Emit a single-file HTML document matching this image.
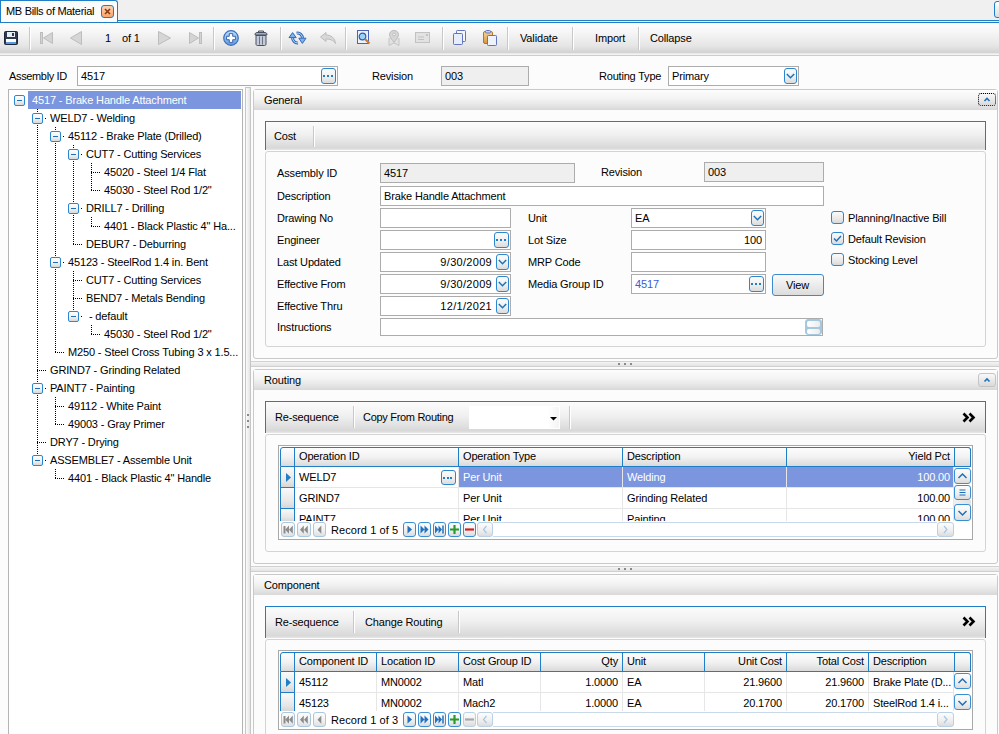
<!DOCTYPE html><html><head><meta charset="utf-8"><style>
*{margin:0;padding:0;box-sizing:border-box}
html,body{width:999px;height:734px;overflow:hidden;background:#fcfcfc;font-family:"Liberation Sans",sans-serif;font-size:11px;color:#000}
div{position:absolute}
.t{white-space:nowrap;line-height:13px;font-size:11px;letter-spacing:-0.15px}
.tb{background:linear-gradient(#fdfdfd,#f3f3f3 45%,#e2e2e2)}
.hdr{background:linear-gradient(#fdfdfd,#f3f3f3 45%,#e3e3e3 80%,#d8d8d8)}
.box{border:1px solid #acacac;background:#fff}
.ro{border:1px solid #acacac;background:#efefef}
.sep{width:1px;background:#c8c8c8;box-shadow:1px 0 0 #fff}
.bbtn{border:1px solid #2d87cf;border-radius:3px;background:linear-gradient(#fbfbfb,#f1f1f1 50%,#dcdcdc)}
.dot{width:2px;height:2px;background:#1f7ec6}
svg{position:absolute;overflow:visible}
</style></head><body>
<div style="left:0px;top:0px;width:999px;height:22px;background:#f0f0f0"></div>
<div style="left:0px;top:20px;width:999px;height:1px;background:#1f7ec6"></div>
<div style="left:0px;top:22px;width:999px;height:1px;background:#1f7ec6"></div>
<div style="left:0px;top:0px;width:118px;height:22px;background:#fcfcfc;border:1px solid #1f7ec6;border-bottom:none;border-radius:0 3px 0 0"></div>
<div class="t" style="left:6px;top:5px;letter-spacing:-0.3px;color:#000">MB Bills of Material</div>
<div style="left:101px;top:5px;width:13px;height:13px;border:1px solid #1f7ec6;border-radius:3px;background:linear-gradient(#fcd3b3,#f9a36c)"><svg width="11" height="11" style="left:0;top:0"><path d="M3 3L8 8M8 3L3 8" stroke="#8a3a0a" stroke-width="1.6"/></svg></div>
<div style="left:994px;top:1px;width:8px;height:17px;border:1px solid #1f7ec6;border-radius:3px;background:linear-gradient(#fff,#ddd)"></div>
<div style="left:0px;top:23px;width:999px;height:30px;background:linear-gradient(#fdfdfd,#f6f6f6 30%,#e6e6e6 75%,#d2d2d2)"></div>
<div style="left:0px;top:53px;width:999px;height:1px;background:#e9e9e9"></div>
<div style="left:0px;top:54px;width:999px;height:1px;background:#f3f3f3"></div>
<div style="left:0px;top:55px;width:999px;height:1px;background:#cdcdcd"></div>
<div class="sep" style="left:29px;top:27px;width:1px;height:23px;"></div>
<div class="sep" style="left:213px;top:27px;width:1px;height:23px;"></div>
<div class="sep" style="left:280px;top:27px;width:1px;height:23px;"></div>
<div class="sep" style="left:345px;top:27px;width:1px;height:23px;"></div>
<div class="sep" style="left:442px;top:27px;width:1px;height:23px;"></div>
<div class="sep" style="left:507px;top:27px;width:1px;height:23px;"></div>
<div class="sep" style="left:572px;top:27px;width:1px;height:23px;"></div>
<div class="sep" style="left:638px;top:27px;width:1px;height:23px;"></div>
<svg width="14" height="14" style="left:4px;top:31px"><rect x="0.5" y="0.5" width="13" height="13" rx="1" fill="#2f3a4e" stroke="#1e2838"/><rect x="3" y="1" width="8" height="5" fill="#e8eef6"/><rect x="8" y="2" width="2" height="3" fill="#2f3a4e"/><rect x="2" y="8" width="10" height="5" fill="#fff"/><rect x="2" y="11" width="10" height="2" fill="#5a9ae0"/></svg>
<svg width="14" height="14" style="left:40px;top:31px"><rect x="0.5" y="1.5" width="2" height="11" fill="#d4d4d4" stroke="#bdbdbd"/><path d="M12.5 1.5 L3.5 7 L12.5 12.5 Z" fill="#d4d4d4" stroke="#bdbdbd"/></svg>
<svg width="14" height="14" style="left:70px;top:31px"><path d="M11.5 0.5 L0.5 7 L11.5 13.5 Z" fill="#d6d6d6" stroke="#bdbdbd"/></svg>
<div class="t" style="left:105px;top:32px;color:#000">1</div>
<div class="t" style="left:122px;top:32px;color:#000">of 1</div>
<svg width="14" height="14" style="left:158px;top:31px"><path d="M0.5 0.5 L12.5 7 L0.5 13.5 Z" fill="#d6d6d6" stroke="#bdbdbd"/></svg>
<svg width="14" height="14" style="left:189px;top:31px"><path d="M0.5 1.5 L9.5 7 L0.5 12.5 Z" fill="#d4d4d4" stroke="#bdbdbd"/><rect x="10.5" y="1.5" width="2" height="11" fill="#d4d4d4" stroke="#bdbdbd"/></svg>
<svg width="17" height="17" style="left:223px;top:30px"><defs><linearGradient id="pg" x1="0" y1="0" x2="0" y2="1"><stop offset="0" stop-color="#bfe0f8"/><stop offset="1" stop-color="#5b98dc"/></linearGradient></defs><circle cx="8" cy="8" r="7.3" fill="url(#pg)" stroke="#3d6cc0" stroke-width="1.2"/><path d="M6.3 3.6H9.7V6.3H12.4V9.7H9.7V12.4H6.3V9.7H3.6V6.3H6.3Z" fill="#fff" stroke="#2f5aa8" stroke-width="0.9"/></svg>
<svg width="14" height="16" style="left:254px;top:30px"><path d="M4.5 2.5 V1 H9.5 V2.5" fill="#d0d4dc" stroke="#4a5064" stroke-width="1"/><path d="M1 5 C1 3 2 2.5 3 2.5 H11 C12 2.5 13 3 13 5 Z" fill="#a4abba" stroke="#4a5064" stroke-width="1"/><path d="M2 5.5 H12 V14 C12 15 11.5 15.5 10.5 15.5 H3.5 C2.5 15.5 2 15 2 14 Z" fill="#c4cbd8" stroke="#4a5064" stroke-width="1"/><path d="M5.5 6.5V14.5M8.5 6.5V14.5" stroke="#6a7286" stroke-width="1"/></svg>
<svg width="25" height="20" style="left:285px;top:28px"><g fill="none" stroke-linecap="butt"><path d="M7.6 9.6 A4.9 4.9 0 0 0 13 14.9" stroke="#3566b8" stroke-width="3"/><path d="M11.6 5.1 A4.9 4.9 0 0 1 17.4 10.4" stroke="#3566b8" stroke-width="3"/><path d="M7.6 9.6 A4.9 4.9 0 0 0 13 14.9" stroke="#b6e0f8" stroke-width="1"/><path d="M11.6 5.1 A4.9 4.9 0 0 1 17.4 10.4" stroke="#b6e0f8" stroke-width="1"/></g><path d="M4 9.6 L7.6 4.6 L11.2 9.6 Z" fill="#7fb6ea" stroke="#3566b8" stroke-width="1"/><path d="M13.8 10.2 L17.4 15.4 L21 10.2 Z" fill="#7fb6ea" stroke="#3566b8" stroke-width="1"/></svg>
<svg width="16" height="12" style="left:320px;top:32px"><path d="M0.5 5 L6 0.5 V3 C11 3 15 6 15.5 11.5 C13 8 10 7 6 7 V9.5 Z" fill="#d8d8d8" stroke="#bcbcbc"/></svg>
<svg width="15" height="16" style="left:357px;top:30px"><rect x="0.5" y="0.5" width="11" height="13" fill="#eef3fb" stroke="#4d63b8"/><circle cx="5.5" cy="6.5" r="3.3" fill="#9fd0f5" stroke="#2c5fa8" stroke-width="1.2"/><path d="M8 9 L12.5 13.5" stroke="#d67a2a" stroke-width="2.2"/></svg>
<svg width="12" height="16" style="left:388px;top:30px"><path d="M1 8 V15.5 L6 13 L11 15.5 V8" fill="#e2e2e2" stroke="#c4c4c4"/><path d="M6 0.5 C8.8 0.5 10.5 2.3 10.5 4.8 C10.5 7.5 7.5 10 6 12.5 C4.5 10 1.5 7.5 1.5 4.8 C1.5 2.3 3.2 0.5 6 0.5Z" fill="#d6d6d6" stroke="#bcbcbc"/><circle cx="6" cy="4.5" r="1.4" fill="#f6f6f6" stroke="#bcbcbc"/></svg>
<svg width="16" height="12" style="left:415px;top:32px"><rect x="0.5" y="0.5" width="14" height="10" fill="#e2e2e2" stroke="#c2c2c2"/><rect x="11" y="2" width="2" height="2" fill="#c2c2c2"/><path d="M3 5H9M3 7.5H9" stroke="#c2c2c2"/></svg>
<svg width="15" height="16" style="left:452px;top:30px"><rect x="4.5" y="0.5" width="9" height="11" rx="0.8" fill="#f4f7fc" stroke="#6276c0"/><rect x="1.5" y="3.5" width="9" height="11" rx="0.8" fill="#e8eef9" stroke="#6276c0"/></svg>
<svg width="15" height="16" style="left:483px;top:30px"><defs><linearGradient id="cg" x1="0" y1="0" x2="0" y2="1"><stop offset="0" stop-color="#f6d79a"/><stop offset="1" stop-color="#d9953a"/></linearGradient></defs><rect x="0.5" y="1.5" width="9" height="12" rx="1.5" fill="url(#cg)" stroke="#b07828"/><rect x="2.5" y="0.5" width="5" height="2.5" rx="1" fill="#c9d3ec" stroke="#6276c0"/><rect x="4.5" y="5.5" width="9" height="10" rx="0.8" fill="#eef2fb" stroke="#6276c0"/></svg>
<div class="t" style="left:520px;top:32px;">Validate</div>
<div class="t" style="left:595px;top:32px;">Import</div>
<div class="t" style="left:650px;top:32px;">Collapse</div>
<div class="t" style="left:9px;top:70px;letter-spacing:-0.35px">Assembly ID</div>
<div class="box" style="left:77px;top:66px;width:261px;height:20px;"></div>
<div class="t" style="left:81px;top:70px;">4517</div>
<div class="bbtn" style="left:321px;top:68px;width:15px;height:16px;"><div class="dot" style="left:1px;top:6px"></div><div class="dot" style="left:5px;top:6px"></div><div class="dot" style="left:9px;top:6px"></div></div>
<div class="t" style="left:372px;top:70px;">Revision</div>
<div class="ro" style="left:441px;top:66px;width:88px;height:20px;"></div>
<div class="t" style="left:445px;top:70px;">003</div>
<div class="t" style="left:599px;top:70px;letter-spacing:-0.2px">Routing Type</div>
<div class="box" style="left:668px;top:66px;width:131px;height:20px;"></div>
<div class="t" style="left:672px;top:70px;">Primary</div>
<div class="bbtn" style="left:784px;top:68px;width:13px;height:16px;"><svg width="11" height="14" style="left:0;top:0"><path d="M1.8 5 L5.5 8.7 L9.2 5" fill="none" stroke="#1a72bf" stroke-width="1.5"/></svg></div>
<div style="left:8px;top:89px;width:235px;height:660px;border:1px solid #b4b4b4;background:#fff"></div>
<div style="left:28px;top:91px;width:213px;height:18px;background:#7b96de"></div>
<div style="left:37px;top:109px;width:1px;height:351px;background:repeating-linear-gradient(#000 0 1px,transparent 1px 2px)"></div>
<div style="left:55px;top:127px;width:1px;height:225px;background:repeating-linear-gradient(#000 0 1px,transparent 1px 2px)"></div>
<div style="left:73px;top:145px;width:1px;height:99px;background:repeating-linear-gradient(#000 0 1px,transparent 1px 2px)"></div>
<div style="left:91px;top:163px;width:1px;height:27px;background:repeating-linear-gradient(#000 0 1px,transparent 1px 2px)"></div>
<div style="left:91px;top:217px;width:1px;height:9px;background:repeating-linear-gradient(#000 0 1px,transparent 1px 2px)"></div>
<div style="left:73px;top:271px;width:1px;height:45px;background:repeating-linear-gradient(#000 0 1px,transparent 1px 2px)"></div>
<div style="left:91px;top:325px;width:1px;height:9px;background:repeating-linear-gradient(#000 0 1px,transparent 1px 2px)"></div>
<div style="left:55px;top:397px;width:1px;height:27px;background:repeating-linear-gradient(#000 0 1px,transparent 1px 2px)"></div>
<div style="left:55px;top:469px;width:1px;height:9px;background:repeating-linear-gradient(#000 0 1px,transparent 1px 2px)"></div>
<div style="left:14px;top:95px;width:11px;height:11px;border:1px solid #2d87cf;border-radius:2px;background:linear-gradient(#fdfdfd,#f2f2f2 50%,#dadada)"><div style="left:2px;top:4px;width:5px;height:1px;background:#1f6fb8"></div></div>
<div class="t" style="left:32px;top:94px;color:#fff">4517 - Brake Handle Attachment</div>
<div style="left:45px;top:118px;width:1px;height:1px;background:#000"></div>
<div style="left:32px;top:113px;width:11px;height:11px;border:1px solid #2d87cf;border-radius:2px;background:linear-gradient(#fdfdfd,#f2f2f2 50%,#dadada)"><div style="left:2px;top:4px;width:5px;height:1px;background:#1f6fb8"></div></div>
<div class="t" style="left:50px;top:112px;color:#000">WELD7 - Welding</div>
<div style="left:63px;top:136px;width:1px;height:1px;background:#000"></div>
<div style="left:50px;top:131px;width:11px;height:11px;border:1px solid #2d87cf;border-radius:2px;background:linear-gradient(#fdfdfd,#f2f2f2 50%,#dadada)"><div style="left:2px;top:4px;width:5px;height:1px;background:#1f6fb8"></div></div>
<div class="t" style="left:68px;top:130px;color:#000">45112 - Brake Plate (Drilled)</div>
<div style="left:81px;top:154px;width:1px;height:1px;background:#000"></div>
<div style="left:68px;top:149px;width:11px;height:11px;border:1px solid #2d87cf;border-radius:2px;background:linear-gradient(#fdfdfd,#f2f2f2 50%,#dadada)"><div style="left:2px;top:4px;width:5px;height:1px;background:#1f6fb8"></div></div>
<div class="t" style="left:86px;top:148px;color:#000">CUT7 - Cutting Services</div>
<div style="left:91px;top:172px;width:10px;height:1px;background:repeating-linear-gradient(90deg,#000 0 1px,transparent 1px 2px)"></div>
<div class="t" style="left:104px;top:166px;color:#000">45020 - Steel 1/4 Flat</div>
<div style="left:91px;top:190px;width:10px;height:1px;background:repeating-linear-gradient(90deg,#000 0 1px,transparent 1px 2px)"></div>
<div class="t" style="left:104px;top:184px;color:#000">45030 - Steel Rod 1/2&quot;</div>
<div style="left:81px;top:208px;width:1px;height:1px;background:#000"></div>
<div style="left:68px;top:203px;width:11px;height:11px;border:1px solid #2d87cf;border-radius:2px;background:linear-gradient(#fdfdfd,#f2f2f2 50%,#dadada)"><div style="left:2px;top:4px;width:5px;height:1px;background:#1f6fb8"></div></div>
<div class="t" style="left:86px;top:202px;color:#000">DRILL7 - Drilling</div>
<div style="left:91px;top:226px;width:10px;height:1px;background:repeating-linear-gradient(90deg,#000 0 1px,transparent 1px 2px)"></div>
<div class="t" style="left:104px;top:220px;color:#000">4401 - Black Plastic 4&quot; Ha...</div>
<div style="left:73px;top:244px;width:10px;height:1px;background:repeating-linear-gradient(90deg,#000 0 1px,transparent 1px 2px)"></div>
<div class="t" style="left:86px;top:238px;color:#000">DEBUR7 - Deburring</div>
<div style="left:63px;top:262px;width:1px;height:1px;background:#000"></div>
<div style="left:50px;top:257px;width:11px;height:11px;border:1px solid #2d87cf;border-radius:2px;background:linear-gradient(#fdfdfd,#f2f2f2 50%,#dadada)"><div style="left:2px;top:4px;width:5px;height:1px;background:#1f6fb8"></div></div>
<div class="t" style="left:68px;top:256px;color:#000">45123 - SteelRod 1.4 in. Bent</div>
<div style="left:73px;top:280px;width:10px;height:1px;background:repeating-linear-gradient(90deg,#000 0 1px,transparent 1px 2px)"></div>
<div class="t" style="left:86px;top:274px;color:#000">CUT7 - Cutting Services</div>
<div style="left:73px;top:298px;width:10px;height:1px;background:repeating-linear-gradient(90deg,#000 0 1px,transparent 1px 2px)"></div>
<div class="t" style="left:86px;top:292px;color:#000">BEND7 - Metals Bending</div>
<div style="left:81px;top:316px;width:1px;height:1px;background:#000"></div>
<div style="left:68px;top:311px;width:11px;height:11px;border:1px solid #2d87cf;border-radius:2px;background:linear-gradient(#fdfdfd,#f2f2f2 50%,#dadada)"><div style="left:2px;top:4px;width:5px;height:1px;background:#1f6fb8"></div></div>
<div class="t" style="left:86px;top:310px;color:#000">&nbsp;- default</div>
<div style="left:91px;top:334px;width:10px;height:1px;background:repeating-linear-gradient(90deg,#000 0 1px,transparent 1px 2px)"></div>
<div class="t" style="left:104px;top:328px;color:#000">45030 - Steel Rod 1/2&quot;</div>
<div style="left:55px;top:352px;width:10px;height:1px;background:repeating-linear-gradient(90deg,#000 0 1px,transparent 1px 2px)"></div>
<div class="t" style="left:68px;top:346px;color:#000">M250 - Steel Cross Tubing 3 x 1.5...</div>
<div style="left:37px;top:370px;width:10px;height:1px;background:repeating-linear-gradient(90deg,#000 0 1px,transparent 1px 2px)"></div>
<div class="t" style="left:50px;top:364px;color:#000">GRIND7 - Grinding Related</div>
<div style="left:45px;top:388px;width:1px;height:1px;background:#000"></div>
<div style="left:32px;top:383px;width:11px;height:11px;border:1px solid #2d87cf;border-radius:2px;background:linear-gradient(#fdfdfd,#f2f2f2 50%,#dadada)"><div style="left:2px;top:4px;width:5px;height:1px;background:#1f6fb8"></div></div>
<div class="t" style="left:50px;top:382px;color:#000">PAINT7 - Painting</div>
<div style="left:55px;top:406px;width:10px;height:1px;background:repeating-linear-gradient(90deg,#000 0 1px,transparent 1px 2px)"></div>
<div class="t" style="left:68px;top:400px;color:#000">49112 - White Paint</div>
<div style="left:55px;top:424px;width:10px;height:1px;background:repeating-linear-gradient(90deg,#000 0 1px,transparent 1px 2px)"></div>
<div class="t" style="left:68px;top:418px;color:#000">49003 - Gray Primer</div>
<div style="left:37px;top:442px;width:10px;height:1px;background:repeating-linear-gradient(90deg,#000 0 1px,transparent 1px 2px)"></div>
<div class="t" style="left:50px;top:436px;color:#000">DRY7 - Drying</div>
<div style="left:45px;top:460px;width:1px;height:1px;background:#000"></div>
<div style="left:32px;top:455px;width:11px;height:11px;border:1px solid #2d87cf;border-radius:2px;background:linear-gradient(#fdfdfd,#f2f2f2 50%,#dadada)"><div style="left:2px;top:4px;width:5px;height:1px;background:#1f6fb8"></div></div>
<div class="t" style="left:50px;top:454px;color:#000">ASSEMBLE7 - Assemble Unit</div>
<div style="left:55px;top:478px;width:10px;height:1px;background:repeating-linear-gradient(90deg,#000 0 1px,transparent 1px 2px)"></div>
<div class="t" style="left:68px;top:472px;color:#000">4401 - Black Plastic 4&quot; Handle</div>
<div style="left:245px;top:87px;width:6px;height:660px;border:1px solid #c6c6c6;border-bottom:none;border-radius:1px 1px 0 0;background:linear-gradient(90deg,#fbfbfb,#e4e4e4)"></div>
<div style="left:247px;top:414px;width:2px;height:2px;background:#8a8a8a"></div>
<div style="left:247px;top:420px;width:2px;height:2px;background:#8a8a8a"></div>
<div style="left:247px;top:426px;width:2px;height:2px;background:#8a8a8a"></div>
<div style="left:253px;top:89px;width:745px;height:270px;border:1px solid #c9c9c9;border-radius:3px;background:#fcfcfc"></div>
<div class="hdr" style="left:254px;top:90px;width:743px;height:20px;"></div>
<div class="t" style="left:264px;top:94px;">General</div>
<div style="left:978px;top:93px;width:18px;height:13px;border:1px dotted #000;border-radius:3px;background:linear-gradient(#f9f9f9,#e6e6e6 60%,#dadada)"><svg width="16" height="11" style="left:0;top:0"><path d="M5.5 7.0 L8 4.5 L10.5 7.0" fill="none" stroke="#1a72bf" stroke-width="1.6"/></svg></div>
<div style="left:265px;top:121px;width:721px;height:29px;border:1px solid #1f7ec6;border-bottom:none;background:linear-gradient(#fcfcfc,#f0f0f0 45%,#d8d8d8 93%,#e8e8e8)"></div>
<div class="t" style="left:274px;top:130px;">Cost</div>
<div class="sep" style="left:313px;top:126px;width:1px;height:21px;"></div>
<div style="left:265px;top:151px;width:721px;height:196px;border:1px solid #d4d4d4;border-radius:3px;background:#fcfcfc"></div>
<div class="t" style="left:277px;top:167px;">Assembly ID</div>
<div class="ro" style="left:380px;top:163px;width:195px;height:20px;"></div>
<div class="t" style="left:384px;top:167px;">4517</div>
<div class="t" style="left:601px;top:166px;">Revision</div>
<div class="ro" style="left:704px;top:162px;width:120px;height:20px;"></div>
<div class="t" style="left:708px;top:166px;">003</div>
<div class="t" style="left:277px;top:190px;">Description</div>
<div class="box" style="left:380px;top:186px;width:444px;height:20px;"></div>
<div class="t" style="left:384px;top:190px;">Brake Handle Attachment</div>
<div class="t" style="left:277px;top:212px;">Drawing No</div>
<div class="box" style="left:380px;top:208px;width:131px;height:20px;"></div>
<div class="t" style="left:277px;top:234px;">Engineer</div>
<div class="box" style="left:380px;top:230px;width:131px;height:20px;"></div>
<div class="bbtn" style="left:494px;top:232px;width:15px;height:16px;"><div class="dot" style="left:1px;top:6px"></div><div class="dot" style="left:5px;top:6px"></div><div class="dot" style="left:9px;top:6px"></div></div>
<div class="t" style="left:277px;top:256px;">Last Updated</div>
<div class="box" style="left:380px;top:252px;width:131px;height:20px;"></div>
<div class="t" style="left:372px;top:256px;width:120px;text-align:right;letter-spacing:0.3px">9/30/2009</div>
<div class="bbtn" style="left:496px;top:254px;width:13px;height:16px;"><svg width="11" height="14" style="left:0;top:0"><path d="M1.8 5 L5.5 8.7 L9.2 5" fill="none" stroke="#1a72bf" stroke-width="1.5"/></svg></div>
<div class="t" style="left:277px;top:278px;">Effective From</div>
<div class="box" style="left:380px;top:274px;width:131px;height:20px;"></div>
<div class="t" style="left:372px;top:278px;width:120px;text-align:right;letter-spacing:0.3px">9/30/2009</div>
<div class="bbtn" style="left:496px;top:276px;width:13px;height:16px;"><svg width="11" height="14" style="left:0;top:0"><path d="M1.8 5 L5.5 8.7 L9.2 5" fill="none" stroke="#1a72bf" stroke-width="1.5"/></svg></div>
<div class="t" style="left:277px;top:300px;">Effective Thru</div>
<div class="box" style="left:380px;top:296px;width:131px;height:20px;"></div>
<div class="t" style="left:372px;top:300px;width:120px;text-align:right;letter-spacing:0.3px">12/1/2021</div>
<div class="bbtn" style="left:496px;top:298px;width:13px;height:16px;"><svg width="11" height="14" style="left:0;top:0"><path d="M1.8 5 L5.5 8.7 L9.2 5" fill="none" stroke="#1a72bf" stroke-width="1.5"/></svg></div>
<div class="t" style="left:277px;top:321px;">Instructions</div>
<div class="box" style="left:380px;top:318px;width:443px;height:18px;"></div>
<div style="left:805px;top:319px;width:17px;height:16px;border:1px solid #a6c8de;border-radius:3px;background:#a6c8de"><div style="left:1px;top:1px;width:13px;height:6px;border-radius:2px;background:linear-gradient(90deg,#fff,#ececec)"></div><div style="left:1px;top:9px;width:13px;height:5px;border-radius:2px;background:linear-gradient(90deg,#fff,#ececec)"></div></div>
<div class="t" style="left:528px;top:212px;">Unit</div>
<div class="box" style="left:631px;top:208px;width:135px;height:20px;"></div>
<div class="t" style="left:635px;top:212px;">EA</div>
<div class="bbtn" style="left:751px;top:210px;width:13px;height:16px;"><svg width="11" height="14" style="left:0;top:0"><path d="M1.8 5 L5.5 8.7 L9.2 5" fill="none" stroke="#1a72bf" stroke-width="1.5"/></svg></div>
<div class="t" style="left:528px;top:234px;">Lot Size</div>
<div class="box" style="left:631px;top:230px;width:135px;height:20px;"></div>
<div class="t" style="left:642px;top:234px;width:120px;text-align:right;">100</div>
<div class="t" style="left:528px;top:256px;">MRP Code</div>
<div class="box" style="left:631px;top:252px;width:135px;height:20px;"></div>
<div class="t" style="left:528px;top:278px;">Media Group ID</div>
<div class="box" style="left:631px;top:274px;width:135px;height:20px;"></div>
<div class="t" style="left:635px;top:278px;color:#3a5bd8">4517</div>
<div class="bbtn" style="left:749px;top:276px;width:15px;height:16px;"><div class="dot" style="left:1px;top:6px"></div><div class="dot" style="left:5px;top:6px"></div><div class="dot" style="left:9px;top:6px"></div></div>
<div style="left:772px;top:274px;width:52px;height:22px;border:1px solid #3c8ad0;border-radius:3px;background:linear-gradient(#fbfbfb,#ececec 50%,#dcdcdc)"></div>
<div class="t" style="left:786px;top:279px;">View</div>
<div style="left:831px;top:211px;width:13px;height:13px;border:1px solid #2d87cf;border-radius:3px;background:linear-gradient(#fbfbfb,#e9e9e9 60%,#d9d9d9)"></div>
<div class="t" style="left:848px;top:212px;">Planning/Inactive Bill</div>
<div style="left:831px;top:232px;width:13px;height:13px;border:1px solid #2d87cf;border-radius:3px;background:linear-gradient(#fbfbfb,#e9e9e9 60%,#d9d9d9)"><svg width="11" height="11" style="left:0;top:0"><path d="M2 5.5 L4.5 8 L9 3" fill="none" stroke="#1f6fb8" stroke-width="1.4"/></svg></div>
<div class="t" style="left:848px;top:233px;">Default Revision</div>
<div style="left:831px;top:253px;width:13px;height:13px;border:1px solid #2d87cf;border-radius:3px;background:linear-gradient(#fbfbfb,#e9e9e9 60%,#d9d9d9)"></div>
<div class="t" style="left:848px;top:254px;">Stocking Level</div>
<div style="left:251px;top:361px;width:748px;height:6px;background:linear-gradient(#d2d2d2 0 1px,#f4f4f4 1px,#e4e4e4 80%,#cfcfcf 80%)"></div>
<div style="left:618px;top:363px;width:2px;height:2px;background:#8a8a8a"></div>
<div style="left:624px;top:363px;width:2px;height:2px;background:#8a8a8a"></div>
<div style="left:630px;top:363px;width:2px;height:2px;background:#8a8a8a"></div>
<div style="left:253px;top:369px;width:745px;height:195px;border:1px solid #c9c9c9;border-radius:3px;background:#fcfcfc"></div>
<div class="hdr" style="left:254px;top:370px;width:743px;height:20px;"></div>
<div class="t" style="left:264px;top:374px;">Routing</div>
<div style="left:978px;top:373px;width:18px;height:14px;border:1px solid #c4c4c4;border-radius:3px;background:linear-gradient(#f9f9f9,#e6e6e6 60%,#dadada)"><svg width="16" height="12" style="left:0;top:0"><path d="M5.5 7.5 L8 5.0 L10.5 7.5" fill="none" stroke="#1a72bf" stroke-width="1.6"/></svg></div>
<div style="left:265px;top:401px;width:721px;height:32px;border:1px solid #1f7ec6;border-bottom:none;background:linear-gradient(#fcfcfc,#f0f0f0 45%,#d8d8d8 93%,#e8e8e8)"></div>
<div class="t" style="left:275px;top:411px;">Re-sequence</div>
<div class="sep" style="left:353px;top:406px;width:1px;height:22px;"></div>
<div class="t" style="left:363px;top:411px;letter-spacing:-0.3px">Copy From Routing</div>
<div style="left:469px;top:406px;width:91px;height:23px;background:#fff"></div>
<div style="left:548px;top:407px;width:11px;height:21px;background:linear-gradient(90deg,#fff,#f4f4f4)"></div>
<svg width="7" height="4" style="left:550px;top:417px"><path d="M0 0H7L3.5 3.5Z" fill="#000"/></svg>
<div class="sep" style="left:569px;top:406px;width:1px;height:23px;"></div>
<svg width="15" height="12" style="left:962px;top:412px"><path d="M1.5 1.5 L5.5 5.5 L1.5 9.5 M7.5 1.5 L11.5 5.5 L7.5 9.5" fill="none" stroke="#000" stroke-width="2.6" stroke-linejoin="miter"/></svg>
<div style="left:265px;top:434px;width:721px;height:118px;border:1px solid #d4d4d4;border-radius:3px;background:#fcfcfc"></div>
<div style="left:278px;top:445px;width:695px;height:95px;border:1px solid #a8a8a8;background:#fff"></div>
<div style="left:280px;top:447px;width:691px;height:20px;border:1px solid #1f7ec6;border-radius:3px 3px 0 0;background:linear-gradient(#fdfdfd,#f2f2f2 50%,#dadada)"></div>
<div style="left:294px;top:447px;width:1px;height:20px;background:#1f7ec6"></div>
<div style="left:458px;top:447px;width:1px;height:20px;background:#1f7ec6"></div>
<div class="t" style="left:299px;top:450px;">Operation ID</div>
<div style="left:622px;top:447px;width:1px;height:20px;background:#1f7ec6"></div>
<div class="t" style="left:463px;top:450px;">Operation Type</div>
<div style="left:786px;top:447px;width:1px;height:20px;background:#1f7ec6"></div>
<div class="t" style="left:627px;top:450px;">Description</div>
<div style="left:954px;top:447px;width:1px;height:20px;background:#1f7ec6"></div>
<div class="t" style="left:787px;top:450px;width:163px;text-align:right">Yield Pct</div>
<div style="left:280px;top:467px;width:15px;height:21px;border-left:1px solid #1f7ec6;border-right:1px solid #1f7ec6;border-bottom:1px solid #1f7ec6;background:linear-gradient(#fafafa,#e6e6e6 70%,#d6d6d6)"></div>
<svg width="6" height="9" style="left:286px;top:473px"><path d="M0 0 L5 4.5 L0 9Z" fill="#1f7ec6"/></svg>
<div style="left:295px;top:467px;width:164px;height:21px;background:#fff;border-right:1px solid #e6e6e6;border-bottom:1px solid #e6e6e6;overflow:hidden"><div class="t" style="left:4px;top:4px;color:#000">WELD7</div></div>
<div style="left:459px;top:467px;width:164px;height:21px;background:#7b96de;border-right:1px solid #e6e6e6;border-bottom:1px solid #e6e6e6;overflow:hidden"><div class="t" style="left:4px;top:4px;color:#fff">Per Unit</div></div>
<div style="left:623px;top:467px;width:164px;height:21px;background:#7b96de;border-right:1px solid #e6e6e6;border-bottom:1px solid #e6e6e6;overflow:hidden"><div class="t" style="left:4px;top:4px;color:#fff">Welding</div></div>
<div style="left:787px;top:467px;width:167px;height:21px;background:#7b96de;border-right:1px solid #e6e6e6;border-bottom:1px solid #e6e6e6;overflow:hidden"><div class="t" style="left:0px;top:4px;width:163px;text-align:right;color:#fff">100.00</div></div>
<div style="left:280px;top:488px;width:15px;height:21px;border-left:1px solid #1f7ec6;border-right:1px solid #1f7ec6;border-bottom:1px solid #1f7ec6;background:linear-gradient(#fafafa,#e6e6e6 70%,#d6d6d6)"></div>
<div style="left:295px;top:488px;width:164px;height:21px;background:#fff;border-right:1px solid #e6e6e6;border-bottom:1px solid #e6e6e6;overflow:hidden"><div class="t" style="left:4px;top:4px;color:#000">GRIND7</div></div>
<div style="left:459px;top:488px;width:164px;height:21px;background:#fff;border-right:1px solid #e6e6e6;border-bottom:1px solid #e6e6e6;overflow:hidden"><div class="t" style="left:4px;top:4px;color:#000">Per Unit</div></div>
<div style="left:623px;top:488px;width:164px;height:21px;background:#fff;border-right:1px solid #e6e6e6;border-bottom:1px solid #e6e6e6;overflow:hidden"><div class="t" style="left:4px;top:4px;color:#000">Grinding Related</div></div>
<div style="left:787px;top:488px;width:167px;height:21px;background:#fff;border-right:1px solid #e6e6e6;border-bottom:1px solid #e6e6e6;overflow:hidden"><div class="t" style="left:0px;top:4px;width:163px;text-align:right;color:#000">100.00</div></div>
<div style="left:280px;top:509px;width:15px;height:12px;border-left:1px solid #1f7ec6;border-right:1px solid #1f7ec6;background:linear-gradient(#fafafa,#e6e6e6 70%,#d6d6d6)"></div>
<div style="left:295px;top:509px;width:164px;height:12px;background:#fff;border-right:1px solid #e6e6e6;overflow:hidden"><div class="t" style="left:4px;top:4px;color:#000">PAINT7</div></div>
<div style="left:459px;top:509px;width:164px;height:12px;background:#fff;border-right:1px solid #e6e6e6;overflow:hidden"><div class="t" style="left:4px;top:4px;color:#000">Per Unit</div></div>
<div style="left:623px;top:509px;width:164px;height:12px;background:#fff;border-right:1px solid #e6e6e6;overflow:hidden"><div class="t" style="left:4px;top:4px;color:#000">Painting</div></div>
<div style="left:787px;top:509px;width:167px;height:12px;background:#fff;border-right:1px solid #e6e6e6;overflow:hidden"><div class="t" style="left:0px;top:4px;width:163px;text-align:right;color:#000">100.00</div></div>
<div class="bbtn" style="left:441px;top:470px;width:15px;height:15px;"><div class="dot" style="left:1px;top:6px"></div><div class="dot" style="left:5px;top:6px"></div><div class="dot" style="left:8px;top:6px"></div></div>
<div style="left:954px;top:447px;width:17px;height:20px;border:1px solid #1f7ec6;border-radius:0 3px 0 0;background:linear-gradient(#fdfdfd,#f2f2f2 50%,#dadada)"></div>
<div style="left:954px;top:467px;width:17px;height:54px;background:#fff"></div>
<div style="left:954px;top:468px;width:17px;height:16px;border:1px solid #3a8fd2;border-radius:3px;background:linear-gradient(#fdfdfd,#eeeeee 60%,#dcdcdc)"><svg width="15" height="14" style="left:0;top:0"><path d="M3.5 9L7.5 5L11.5 9" fill="none" stroke="#1f6fb8" stroke-width="1.5"/></svg></div>
<div style="left:954px;top:485px;width:17px;height:15px;border:1px solid #3a8fd2;border-radius:3px;background:linear-gradient(#fdfdfd,#eeeeee 60%,#dcdcdc)"><svg width="15" height="13" style="left:0;top:0"><path d="M4.5 4H10.5M4.5 6.5H10.5M4.5 9H10.5" stroke="#1f6fb8" stroke-width="1.1"/></svg></div>
<div style="left:954px;top:500px;width:17px;height:5px;background:linear-gradient(90deg,#f0f0f0,#e2e2e2)"></div>
<div style="left:954px;top:504px;width:17px;height:17px;border:1px solid #3a8fd2;border-radius:3px;background:linear-gradient(#fdfdfd,#eeeeee 60%,#dcdcdc)"><svg width="15" height="15" style="left:0;top:0"><path d="M3.5 6L7.5 10L11.5 6" fill="none" stroke="#1f6fb8" stroke-width="1.5"/></svg></div>
<div style="left:281px;top:522px;width:14px;height:15px;border:1px solid #a9c7df;border-radius:3px;background:linear-gradient(#fdfdfd,#f0f0f0 60%,#e0e0e0)"><svg width="12" height="13" style="left:0;top:0"><path d="M2.5 3V10.5" stroke="#8c8c8c" stroke-width="2"/><path d="M7 2.5L3.2 6.7L7 10.8ZM10.8 2.5L7 6.7L10.8 10.8Z" fill="#8c8c8c"/></svg></div>
<div style="left:297px;top:522px;width:14px;height:15px;border:1px solid #a9c7df;border-radius:3px;background:linear-gradient(#fdfdfd,#f0f0f0 60%,#e0e0e0)"><svg width="12" height="13" style="left:0;top:0"><path d="M5.8 2.5L2 6.7L5.8 10.8ZM9.8 2.5L6 6.7L9.8 10.8Z" fill="#8c8c8c"/></svg></div>
<div style="left:313px;top:522px;width:13px;height:15px;border:1px solid #a9c7df;border-radius:3px;background:linear-gradient(#fdfdfd,#f0f0f0 60%,#e0e0e0)"><svg width="11" height="13" style="left:0;top:0"><path d="M7.3 2.5L3.5 6.7L7.3 10.8Z" fill="#8c8c8c"/></svg></div>
<div class="t" style="left:331px;top:524px;letter-spacing:0.1px">Record 1 of 5</div>
<div style="left:403px;top:522px;width:13px;height:15px;border:1px solid #3a8fd2;border-radius:3px;background:linear-gradient(#fdfdfd,#eeeeee 60%,#dcdcdc)"><svg width="11" height="13" style="left:0;top:0"><path d="M3.5 2.5L8 6.5L3.5 10.5Z" fill="#1f72bf"/></svg></div>
<div style="left:418px;top:522px;width:13px;height:15px;border:1px solid #3a8fd2;border-radius:3px;background:linear-gradient(#fdfdfd,#eeeeee 60%,#dcdcdc)"><svg width="11" height="13" style="left:0;top:0"><path d="M1.5 2.5L5.5 6.5L1.5 10.5ZM5.5 2.5L9.5 6.5L5.5 10.5Z" fill="#1f72bf"/></svg></div>
<div style="left:433px;top:522px;width:13px;height:15px;border:1px solid #3a8fd2;border-radius:3px;background:linear-gradient(#fdfdfd,#eeeeee 60%,#dcdcdc)"><svg width="11" height="13" style="left:0;top:0"><path d="M1 2.5L4.5 6.5L1 10.5ZM4.5 2.5L8 6.5L4.5 10.5Z" fill="#1f72bf"/><path d="M9 2.5V10.5" stroke="#1f72bf" stroke-width="1.5"/></svg></div>
<div style="left:448px;top:522px;width:13px;height:15px;border:1px solid #3a8fd2;border-radius:3px;background:linear-gradient(#fdfdfd,#eeeeee 60%,#dcdcdc)"><svg width="11" height="13" style="left:0;top:0"><path d="M5.5 2V11M1 6.5H10" stroke="#2a9a2a" stroke-width="2.2"/></svg></div>
<div style="left:463px;top:522px;width:13px;height:15px;border:1px solid #3a8fd2;border-radius:3px;background:linear-gradient(#fdfdfd,#eeeeee 60%,#dcdcdc)"><svg width="11" height="13" style="left:0;top:0"><path d="M1 6.5H10" stroke="#d42020" stroke-width="2.2"/></svg></div>
<div style="left:477px;top:522px;width:16px;height:15px;border:1px solid #b9d0e6;border-radius:3px;background:linear-gradient(#fdfdfd,#eeeeee 60%,#dcdcdc)"><svg width="14" height="13" style="left:0;top:0"><path d="M8.5 3L5.5 6.5L8.5 10" fill="none" stroke="#a9c6e2" stroke-width="1.2"/></svg></div>
<div style="left:493px;top:522px;width:444px;height:15px;border-top:1px solid #c9d9e9;border-bottom:1px solid #c9d9e9;background:#fff"></div>
<div style="left:937px;top:522px;width:17px;height:15px;border:1px solid #b9d0e6;border-radius:3px;background:linear-gradient(#fdfdfd,#eeeeee 60%,#dcdcdc)"><svg width="15" height="13" style="left:0;top:0"><path d="M6 3L9 6.5L6 10" fill="none" stroke="#a9c6e2" stroke-width="1.2"/></svg></div>
<div style="left:251px;top:566px;width:748px;height:6px;background:linear-gradient(#d2d2d2 0 1px,#f4f4f4 1px,#e4e4e4 80%,#cfcfcf 80%)"></div>
<div style="left:618px;top:568px;width:2px;height:2px;background:#8a8a8a"></div>
<div style="left:624px;top:568px;width:2px;height:2px;background:#8a8a8a"></div>
<div style="left:630px;top:568px;width:2px;height:2px;background:#8a8a8a"></div>
<div style="left:253px;top:574px;width:745px;height:227px;border:1px solid #c9c9c9;border-radius:3px;background:#fcfcfc"></div>
<div class="hdr" style="left:254px;top:575px;width:743px;height:20px;"></div>
<div class="t" style="left:264px;top:579px;">Component</div>
<div style="left:265px;top:606px;width:721px;height:32px;border:1px solid #1f7ec6;border-bottom:none;background:linear-gradient(#fcfcfc,#f0f0f0 45%,#d8d8d8 93%,#e8e8e8)"></div>
<div class="t" style="left:275px;top:616px;">Re-sequence</div>
<div class="sep" style="left:353px;top:611px;width:1px;height:22px;"></div>
<div class="t" style="left:365px;top:616px;">Change Routing</div>
<div class="sep" style="left:458px;top:611px;width:1px;height:22px;"></div>
<svg width="15" height="12" style="left:962px;top:616px"><path d="M1.5 1.5 L5.5 5.5 L1.5 9.5 M7.5 1.5 L11.5 5.5 L7.5 9.5" fill="none" stroke="#000" stroke-width="2.6" stroke-linejoin="miter"/></svg>
<div style="left:265px;top:639px;width:721px;height:162px;border:1px solid #d4d4d4;border-radius:3px;background:#fcfcfc"></div>
<div style="left:278px;top:650px;width:695px;height:80px;border:1px solid #a8a8a8;background:#fff"></div>
<div style="left:280px;top:652px;width:691px;height:20px;border:1px solid #1f7ec6;border-radius:3px 3px 0 0;background:linear-gradient(#fdfdfd,#f2f2f2 50%,#dadada)"></div>
<div style="left:294px;top:652px;width:1px;height:20px;background:#1f7ec6"></div>
<div style="left:376px;top:652px;width:1px;height:20px;background:#1f7ec6"></div>
<div class="t" style="left:299px;top:655px;">Component ID</div>
<div style="left:458px;top:652px;width:1px;height:20px;background:#1f7ec6"></div>
<div class="t" style="left:381px;top:655px;">Location ID</div>
<div style="left:540px;top:652px;width:1px;height:20px;background:#1f7ec6"></div>
<div class="t" style="left:463px;top:655px;">Cost Group ID</div>
<div style="left:622px;top:652px;width:1px;height:20px;background:#1f7ec6"></div>
<div class="t" style="left:541px;top:655px;width:77px;text-align:right">Qty</div>
<div style="left:704px;top:652px;width:1px;height:20px;background:#1f7ec6"></div>
<div class="t" style="left:627px;top:655px;">Unit</div>
<div style="left:786px;top:652px;width:1px;height:20px;background:#1f7ec6"></div>
<div class="t" style="left:705px;top:655px;width:77px;text-align:right">Unit Cost</div>
<div style="left:868px;top:652px;width:1px;height:20px;background:#1f7ec6"></div>
<div class="t" style="left:787px;top:655px;width:77px;text-align:right">Total Cost</div>
<div style="left:954px;top:652px;width:1px;height:20px;background:#1f7ec6"></div>
<div class="t" style="left:873px;top:655px;">Description</div>
<div style="left:280px;top:672px;width:15px;height:21px;border-left:1px solid #1f7ec6;border-right:1px solid #1f7ec6;border-bottom:1px solid #1f7ec6;background:linear-gradient(#fafafa,#e6e6e6 70%,#d6d6d6)"></div>
<svg width="6" height="9" style="left:286px;top:678px"><path d="M0 0 L5 4.5 L0 9Z" fill="#1f7ec6"/></svg>
<div style="left:295px;top:672px;width:82px;height:21px;background:#fff;border-right:1px solid #e6e6e6;border-bottom:1px solid #e6e6e6;overflow:hidden"><div class="t" style="left:4px;top:4px;color:#000">45112</div></div>
<div style="left:377px;top:672px;width:82px;height:21px;background:#fff;border-right:1px solid #e6e6e6;border-bottom:1px solid #e6e6e6;overflow:hidden"><div class="t" style="left:4px;top:4px;color:#000">MN0002</div></div>
<div style="left:459px;top:672px;width:82px;height:21px;background:#fff;border-right:1px solid #e6e6e6;border-bottom:1px solid #e6e6e6;overflow:hidden"><div class="t" style="left:4px;top:4px;color:#000">Matl</div></div>
<div style="left:541px;top:672px;width:82px;height:21px;background:#fff;border-right:1px solid #e6e6e6;border-bottom:1px solid #e6e6e6;overflow:hidden"><div class="t" style="left:0px;top:4px;width:77px;text-align:right;color:#000">1.0000</div></div>
<div style="left:623px;top:672px;width:82px;height:21px;background:#fff;border-right:1px solid #e6e6e6;border-bottom:1px solid #e6e6e6;overflow:hidden"><div class="t" style="left:4px;top:4px;color:#000">EA</div></div>
<div style="left:705px;top:672px;width:82px;height:21px;background:#fff;border-right:1px solid #e6e6e6;border-bottom:1px solid #e6e6e6;overflow:hidden"><div class="t" style="left:0px;top:4px;width:77px;text-align:right;color:#000">21.9600</div></div>
<div style="left:787px;top:672px;width:82px;height:21px;background:#fff;border-right:1px solid #e6e6e6;border-bottom:1px solid #e6e6e6;overflow:hidden"><div class="t" style="left:0px;top:4px;width:77px;text-align:right;color:#000">21.9600</div></div>
<div style="left:869px;top:672px;width:85px;height:21px;background:#fff;border-right:1px solid #e6e6e6;border-bottom:1px solid #e6e6e6;overflow:hidden"><div class="t" style="left:4px;top:4px;color:#000">Brake Plate (D...</div></div>
<div style="left:280px;top:693px;width:15px;height:18px;border-left:1px solid #1f7ec6;border-right:1px solid #1f7ec6;background:linear-gradient(#fafafa,#e6e6e6 70%,#d6d6d6)"></div>
<div style="left:295px;top:693px;width:82px;height:18px;background:#fff;border-right:1px solid #e6e6e6;overflow:hidden"><div class="t" style="left:4px;top:4px;color:#000">45123</div></div>
<div style="left:377px;top:693px;width:82px;height:18px;background:#fff;border-right:1px solid #e6e6e6;overflow:hidden"><div class="t" style="left:4px;top:4px;color:#000">MN0002</div></div>
<div style="left:459px;top:693px;width:82px;height:18px;background:#fff;border-right:1px solid #e6e6e6;overflow:hidden"><div class="t" style="left:4px;top:4px;color:#000">Mach2</div></div>
<div style="left:541px;top:693px;width:82px;height:18px;background:#fff;border-right:1px solid #e6e6e6;overflow:hidden"><div class="t" style="left:0px;top:4px;width:77px;text-align:right;color:#000">1.0000</div></div>
<div style="left:623px;top:693px;width:82px;height:18px;background:#fff;border-right:1px solid #e6e6e6;overflow:hidden"><div class="t" style="left:4px;top:4px;color:#000">EA</div></div>
<div style="left:705px;top:693px;width:82px;height:18px;background:#fff;border-right:1px solid #e6e6e6;overflow:hidden"><div class="t" style="left:0px;top:4px;width:77px;text-align:right;color:#000">20.1700</div></div>
<div style="left:787px;top:693px;width:82px;height:18px;background:#fff;border-right:1px solid #e6e6e6;overflow:hidden"><div class="t" style="left:0px;top:4px;width:77px;text-align:right;color:#000">20.1700</div></div>
<div style="left:869px;top:693px;width:85px;height:18px;background:#fff;border-right:1px solid #e6e6e6;overflow:hidden"><div class="t" style="left:4px;top:4px;color:#000">SteelRod 1.4 i...</div></div>
<div style="left:954px;top:652px;width:17px;height:20px;border:1px solid #1f7ec6;border-radius:0 3px 0 0;background:linear-gradient(#fdfdfd,#f2f2f2 50%,#dadada)"></div>
<div style="left:954px;top:672px;width:17px;height:39px;background:#fff"></div>
<div style="left:954px;top:673px;width:17px;height:16px;border:1px solid #3a8fd2;border-radius:3px;background:linear-gradient(#fdfdfd,#eeeeee 60%,#dcdcdc)"><svg width="15" height="14" style="left:0;top:0"><path d="M3.5 9L7.5 5L11.5 9" fill="none" stroke="#1f6fb8" stroke-width="1.5"/></svg></div>
<div style="left:954px;top:694px;width:17px;height:16px;border:1px solid #3a8fd2;border-radius:3px;background:linear-gradient(#fdfdfd,#eeeeee 60%,#dcdcdc)"><svg width="15" height="15" style="left:0;top:0"><path d="M3.5 6L7.5 10L11.5 6" fill="none" stroke="#1f6fb8" stroke-width="1.5"/></svg></div>
<div style="left:281px;top:712px;width:14px;height:15px;border:1px solid #a9c7df;border-radius:3px;background:linear-gradient(#fdfdfd,#f0f0f0 60%,#e0e0e0)"><svg width="12" height="13" style="left:0;top:0"><path d="M2.5 3V10.5" stroke="#8c8c8c" stroke-width="2"/><path d="M7 2.5L3.2 6.7L7 10.8ZM10.8 2.5L7 6.7L10.8 10.8Z" fill="#8c8c8c"/></svg></div>
<div style="left:297px;top:712px;width:14px;height:15px;border:1px solid #a9c7df;border-radius:3px;background:linear-gradient(#fdfdfd,#f0f0f0 60%,#e0e0e0)"><svg width="12" height="13" style="left:0;top:0"><path d="M5.8 2.5L2 6.7L5.8 10.8ZM9.8 2.5L6 6.7L9.8 10.8Z" fill="#8c8c8c"/></svg></div>
<div style="left:313px;top:712px;width:13px;height:15px;border:1px solid #a9c7df;border-radius:3px;background:linear-gradient(#fdfdfd,#f0f0f0 60%,#e0e0e0)"><svg width="11" height="13" style="left:0;top:0"><path d="M7.3 2.5L3.5 6.7L7.3 10.8Z" fill="#8c8c8c"/></svg></div>
<div class="t" style="left:331px;top:714px;letter-spacing:0.1px">Record 1 of 3</div>
<div style="left:403px;top:712px;width:13px;height:15px;border:1px solid #3a8fd2;border-radius:3px;background:linear-gradient(#fdfdfd,#eeeeee 60%,#dcdcdc)"><svg width="11" height="13" style="left:0;top:0"><path d="M3.5 2.5L8 6.5L3.5 10.5Z" fill="#1f72bf"/></svg></div>
<div style="left:418px;top:712px;width:13px;height:15px;border:1px solid #3a8fd2;border-radius:3px;background:linear-gradient(#fdfdfd,#eeeeee 60%,#dcdcdc)"><svg width="11" height="13" style="left:0;top:0"><path d="M1.5 2.5L5.5 6.5L1.5 10.5ZM5.5 2.5L9.5 6.5L5.5 10.5Z" fill="#1f72bf"/></svg></div>
<div style="left:433px;top:712px;width:13px;height:15px;border:1px solid #3a8fd2;border-radius:3px;background:linear-gradient(#fdfdfd,#eeeeee 60%,#dcdcdc)"><svg width="11" height="13" style="left:0;top:0"><path d="M1 2.5L4.5 6.5L1 10.5ZM4.5 2.5L8 6.5L4.5 10.5Z" fill="#1f72bf"/><path d="M9 2.5V10.5" stroke="#1f72bf" stroke-width="1.5"/></svg></div>
<div style="left:448px;top:712px;width:13px;height:15px;border:1px solid #3a8fd2;border-radius:3px;background:linear-gradient(#fdfdfd,#eeeeee 60%,#dcdcdc)"><svg width="11" height="13" style="left:0;top:0"><path d="M5.5 2V11M1 6.5H10" stroke="#2a9a2a" stroke-width="2.2"/></svg></div>
<div style="left:463px;top:712px;width:13px;height:15px;border:1px solid #b9d0e6;border-radius:3px;background:linear-gradient(#fdfdfd,#eeeeee 60%,#dcdcdc)"><svg width="11" height="13" style="left:0;top:0"><path d="M1 6.5H10" stroke="#a8a8a8" stroke-width="2.2"/></svg></div>
<div style="left:477px;top:712px;width:16px;height:15px;border:1px solid #b9d0e6;border-radius:3px;background:linear-gradient(#fdfdfd,#eeeeee 60%,#dcdcdc)"><svg width="14" height="13" style="left:0;top:0"><path d="M8.5 3L5.5 6.5L8.5 10" fill="none" stroke="#a9c6e2" stroke-width="1.2"/></svg></div>
<div style="left:493px;top:712px;width:444px;height:15px;border-top:1px solid #c9d9e9;border-bottom:1px solid #c9d9e9;background:#fff"></div>
<div style="left:937px;top:712px;width:17px;height:15px;border:1px solid #b9d0e6;border-radius:3px;background:linear-gradient(#fdfdfd,#eeeeee 60%,#dcdcdc)"><svg width="15" height="13" style="left:0;top:0"><path d="M6 3L9 6.5L6 10" fill="none" stroke="#a9c6e2" stroke-width="1.2"/></svg></div>
</body></html>
